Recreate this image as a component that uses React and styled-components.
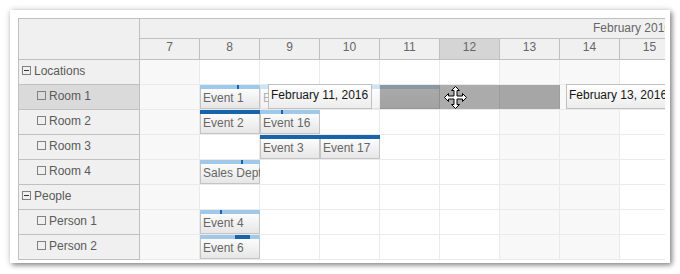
import React from "react";
import styled, { createGlobalStyle } from "styled-components";

// scheduler data
const days = [7, 8, 9, 10, 11, 12, 13, 14, 15];
const weekend = [7, 13, 14];
const COL = 60;

const rows = [
  { name: "Locations", parent: true },
  { name: "Room 1", selected: true },
  { name: "Room 2" },
  { name: "Room 3" },
  { name: "Room 4" },
  { name: "People", parent: true },
  { name: "Person 1" },
  { name: "Person 2" },
];

// progress: [from, width] of the dark part of the bar, in px
const events = {
  "Room 1": [
    { text: "Event 1", day: 8, span: 1, progress: [37, 2] },
    { text: "Event 5", day: 9, span: 3, ghost: true },
  ],
  "Room 2": [
    { text: "Event 2", day: 8, span: 1, progress: [0, 60] },
    { text: "Event 16", day: 9, span: 1, progress: [21, 2] },
  ],
  "Room 3": [
    { text: "Event 3", day: 9, span: 1, progress: [0, 60] },
    { text: "Event 17", day: 10, span: 1, progress: [0, 60] },
  ],
  "Room 4": [{ text: "Sales Dept", day: 8, span: 1, progress: [41, 2] }],
  "Person 1": [{ text: "Event 4", day: 8, span: 1, progress: [20, 2] }],
  "Person 2": [{ text: "Event 6", day: 8, span: 1, progress: [35, 15] }],
};

const GlobalStyle = createGlobalStyle`
  body {
    margin: 0;
    background: #fff;
    font-family: "Liberation Sans", Arial, sans-serif;
    font-size: 12px;
  }
`;

const Card = styled.div`
  margin: 10px;
  width: 660px;
  height: 253px;
  box-sizing: border-box;
  padding: 8px 5px 5px 8px;
  background: #fff;
  box-shadow: 2px 2px 5px rgba(0, 0, 0, 0.45), 0 0 8px rgba(0, 0, 0, 0.12);
`;

const Scheduler = styled.div`
  display: flex;
  height: 241px;
  border-left: 1px solid #c0c0c0;
  border-top: 1px solid #c0c0c0;
  overflow: hidden;
  color: #666;
`;

const RowHeaders = styled.div`
  flex: 0 0 121px;
  box-sizing: border-box;
  border-right: 1px solid #c0c0c0;
  background: #f0f0f0;
`;

const Corner = styled.div`
  height: 41px;
  box-sizing: border-box;
  border-bottom: 1px solid #c0c0c0;
`;

const RowHeader = styled.div`
  display: flex;
  align-items: center;
  height: 25px;
  box-sizing: border-box;
  padding: 0 0 3px ${(p) => (p.$parent ? 3 : 18)}px;
  border-bottom: 1px solid #c0c0c0;
  background: ${(p) => (p.$selected ? "#dadada" : "#f0f0f0")};
  color: #5a5a5a;
  line-height: 14px;
  white-space: nowrap;
`;

const TreeIcon = styled.span`
  position: relative;
  flex: none;
  width: 9px;
  height: 9px;
  box-sizing: border-box;
  margin-right: 3px;
  border: 1px solid #808080;
  &::after {
    content: "";
    display: ${(p) => (p.$minus ? "block" : "none")};
    position: absolute;
    left: 1px;
    top: 3px;
    width: 5px;
    height: 1px;
    background: #333;
  }
`;

const Main = styled.div`
  flex: 1;
  min-width: 0;
  overflow: hidden;
`;

const MonthRow = styled.div`
  height: 20px;
  box-sizing: border-box;
  padding-left: 453px;
  border-bottom: 1px solid #c0c0c0;
  background: #f0f0f0;
  line-height: 18px;
  white-space: nowrap;
`;

const DayRow = styled.div`
  display: flex;
  height: 21px;
  box-sizing: border-box;
  border-bottom: 1px solid #c0c0c0;
`;

const DayCell = styled.div`
  flex: 0 0 ${COL}px;
  box-sizing: border-box;
  border-right: 1px solid #c0c0c0;
  background: ${(p) => (p.$active ? "#d5d5d5" : "#f0f0f0")};
  text-align: center;
  line-height: 16px;
`;

const Row = styled.div`
  position: relative;
  display: flex;
  height: 25px;
`;

const Cell = styled.div`
  flex: 0 0 ${COL}px;
  box-sizing: border-box;
  border-right: 1px solid #eaeaea;
  border-bottom: 1px solid #eaeaea;
  background: ${(p) => (p.$weekend ? "#f8f8f8" : "#fff")};
`;

const Event = styled.div`
  position: absolute;
  top: 0;
  z-index: 1;
  height: 24px;
  display: flex;
  flex-direction: column;
  overflow: hidden;
  opacity: ${(p) => (p.$ghost ? 0.5 : 1)};
`;

const Bar = styled.div`
  position: relative;
  flex: 0 0 4px;
  background: #9fc8e9;
`;

const BarFill = styled.div`
  position: absolute;
  top: 0;
  bottom: 0;
  background: #1764aa;
`;

const EventBody = styled.div`
  flex: 1;
  padding-left: 2px;
  border: 1px solid #c4c4c4;
  border-top: none;
  background: linear-gradient(#fcfcfc, #e6e6e6);
  color: #666;
  line-height: 19px;
  white-space: nowrap;
`;

const DragShadow = styled.div`
  position: absolute;
  top: 0;
  left: 240px;
  z-index: 2;
  width: 180px;
  height: 24px;
  background: rgba(0, 0, 0, 0.33);
`;

const Bubble = styled.div`
  position: absolute;
  top: -1px;
  left: ${(p) => p.$left}px;
  z-index: 3;
  height: 25px;
  box-sizing: border-box;
  padding: 0 3px 2px 2px;
  border: 1px solid #c0c0c0;
  background: linear-gradient(#fff, #ececec);
  color: #161616;
  line-height: 21px;
  white-space: nowrap;
`;

const MoveCursor = styled.svg`
  position: absolute;
  top: 1px;
  left: 304px;
  z-index: 4;
`;

const CursorIcon = () => (
  <MoveCursor width="23" height="23" viewBox="0 0 23 23">
    <path
      d="M11.5 0.5 L15.5 4.5 L13 4.5 L13 10 L18.5 10 L18.5 7.5 L22.5 11.5 L18.5 15.5 L18.5 13 L13 13 L13 18.5 L15.5 18.5 L11.5 22.5 L7.5 18.5 L10 18.5 L10 13 L4.5 13 L4.5 15.5 L0.5 11.5 L4.5 7.5 L4.5 10 L10 10 L10 4.5 L7.5 4.5 Z"
      fill="#fff"
      stroke="#000"
      strokeWidth="1"
    />
  </MoveCursor>
);

const App = () => {
  return (
    <>
      <GlobalStyle />
      <Card>
        <Scheduler>
          <RowHeaders>
            <Corner />
            {rows.map((r) => (
              <RowHeader key={r.name} $parent={r.parent} $selected={r.selected}>
                <TreeIcon $minus={r.parent} />
                {r.name}
              </RowHeader>
            ))}
          </RowHeaders>
          <Main>
            <MonthRow>February 2016</MonthRow>
            <DayRow>
              {days.map((d) => (
                <DayCell key={d} $active={d === 12}>
                  {d}
                </DayCell>
              ))}
            </DayRow>
            {rows.map((r) => (
              <Row key={r.name}>
                {days.map((d) => (
                  <Cell key={d} $weekend={weekend.includes(d)} />
                ))}
                {(events[r.name] || []).map((e) => (
                  <Event
                    key={e.text}
                    $ghost={e.ghost}
                    style={{ left: (e.day - 7) * COL, width: e.span * COL }}
                  >
                    <Bar>
                      {e.progress && (
                        <BarFill
                          style={{ left: e.progress[0], width: e.progress[1] }}
                        />
                      )}
                    </Bar>
                    <EventBody>{e.text}</EventBody>
                  </Event>
                ))}
                {r.selected && (
                  <>
                    <DragShadow />
                    <Bubble $left={128}>February 11, 2016</Bubble>
                    <Bubble $left={426}>February 13, 2016</Bubble>
                    <CursorIcon />
                  </>
                )}
              </Row>
            ))}
          </Main>
        </Scheduler>
      </Card>
    </>
  );
};

export default App;
